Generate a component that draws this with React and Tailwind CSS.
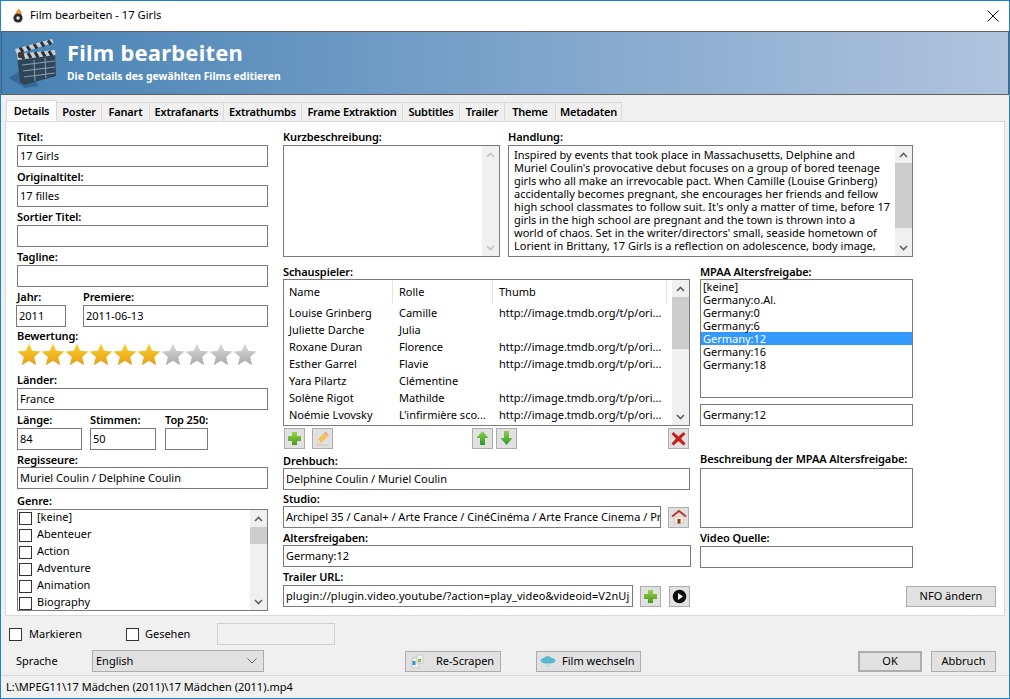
import React from "react";

const Label = ({ children, className = "h-[18px] pb-[1px]" }) => (
  <div className={`${className} flex items-end shrink-0 font-semibold leading-[14px] whitespace-nowrap text-[11px] tracking-[-0.1px]`}>{children}</div>
);

const Input = ({ value = "", className = "w-full", disabled = false }) => (
  <div className={`${className} h-[22px] shrink-0 border ${disabled ? "border-[#cfcfcf] bg-[#f0f0f0]" : "border-[#7a7a7a] bg-white"} pl-[2px] pr-[2px] leading-[20px] overflow-hidden whitespace-nowrap`}>{value}</div>
);

const Chevron = ({ up, light }) => (
  <svg width="9" height="6" viewBox="0 0 9 6" fill="none" stroke={light ? "#c4c4c4" : "#606060"} strokeWidth="1.6">
    <path d={up ? "M1 5 L4.5 1.5 L8 5" : "M1 1 L4.5 4.5 L8 1"} />
  </svg>
);

const Scrollbar = ({ thumbClass = "", light = false }) => (
  <div className="w-[17px] shrink-0 h-full bg-[#f0f0f0] flex flex-col">
    <div className="h-[17px] shrink-0 flex items-center justify-center"><Chevron up light={light} /></div>
    <div className="flex-1 min-h-0">{!light && <div className={`bg-[#cdcdcd] ${thumbClass}`} />}</div>
    <div className="h-[17px] shrink-0 flex items-center justify-center"><Chevron light={light} /></div>
  </div>
);

const Star = ({ gold, id }) => (
  <svg width="24" height="23" viewBox="0 0 24 23" className="shrink-0">
    <defs>
      <linearGradient id={id} x1="0" y1="0" x2="0" y2="1">
        <stop offset="0" stopColor={gold ? "#fdd22f" : "#dcdcdc"} />
        <stop offset="1" stopColor={gold ? "#e39c13" : "#a9a9a9"} />
      </linearGradient>
    </defs>
    <path d="M12 0.5 L15.2 7.8 L23.5 8.6 L17.2 14 L19.2 22.2 L12 17.8 L4.8 22.2 L6.8 14 L0.5 8.6 L8.8 7.8 Z" fill={`url(#${id})`} />
  </svg>
);

const IconBtn = ({ children, className = "" }) => (
  <div className={`w-[21px] h-[21px] shrink-0 border border-[#adadad] bg-[#e1e1e1] flex items-center justify-center ${className}`}>{children}</div>
);

const Plus = () => (
  <svg width="15" height="15" viewBox="0 0 15 15">
    <defs><linearGradient id="pg" x1="0" y1="0" x2="0" y2="1"><stop offset="0" stopColor="#9ad04a" /><stop offset="1" stopColor="#4a9a1e" /></linearGradient></defs>
    <path d="M5 1 H10 V5 H14 V10 H10 V14 H5 V10 H1 V5 H5 Z" fill="url(#pg)" />
  </svg>
);
const Pencil = () => (
  <svg width="16" height="16" viewBox="0 0 16 16">
    <path d="M10 2.5 L13 5.5 L6 12.5 L3 13 L3.5 9.5 Z" fill="#f6c55a" stroke="#e8a23c" strokeWidth="0.6" />
    <path d="M10.5 1.5 L14 5 L12.8 6.2 L9.3 2.7 Z" fill="#eba0a0" />
    <path d="M3.5 9.5 L6 12.5 L3 13 Z" fill="#f5ead0" />
    <path d="M1 15 H14" stroke="#d0c6b4" strokeWidth="1" />
  </svg>
);
const Arrow = ({ down }) => (
  <svg width="13" height="16" viewBox="0 0 13 16">
    <defs><linearGradient id={down ? "ad" : "au"} x1="0" y1="0" x2="0" y2="1"><stop offset="0" stopColor="#93cc4e" /><stop offset="1" stopColor="#2f9a2a" /></linearGradient></defs>
    <path d={down ? "M4 1 H9 V8 H12.5 L6.5 15 L0.5 8 H4 Z" : "M6.5 1 L12.5 8 H9 V15 H4 V8 H0.5 Z"} fill={`url(#${down ? "ad" : "au"})`} />
  </svg>
);
const Cross = () => (
  <svg width="15" height="15" viewBox="0 0 15 15">
    <path d="M2.5 1 L7.5 5.5 L12.5 1 L14.5 3 L10 7.5 L14.5 12.5 L12.5 14.5 L7.5 10 L2.5 14.5 L0.5 12.5 L5 7.5 L0.5 3 Z" fill="#c8211c" />
  </svg>
);
const House = () => (
  <svg width="16" height="16" viewBox="0 0 16 16">
    <path d="M3.5 7.5 H12.5 V14.5 H3.5 Z" fill="#f3ead8" stroke="#c9bda5" strokeWidth="0.5" />
    <path d="M6.5 10 H9.5 V14.5 H6.5 Z" fill="#8a3a20" />
    <path d="M1 7.5 L8 2 L15 7.5" fill="none" stroke="#c0302a" strokeWidth="1.8" />
  </svg>
);
const Play = () => (
  <svg width="15" height="15" viewBox="0 0 15 15">
    <circle cx="7.5" cy="7.5" r="6.8" fill="#0a0a0a" />
    <path d="M6 4 L11 7.5 L6 11 Z" fill="#ffffff" />
  </svg>
);
const Rescrape = () => (
  <svg width="14" height="15" viewBox="0 0 14 15" className="shrink-0">
    <path d="M2 4 H9 V14 H2 Z" fill="#eeeee8" stroke="#b5b5aa" strokeWidth="0.6" />
    <path d="M7 1 H13 V9 H7 Z" fill="#f5f5ef" stroke="#b5b5aa" strokeWidth="0.6" />
    <rect x="2.5" y="7" width="3" height="4" fill="#3a8fd0" />
    <rect x="8" y="5" width="3" height="3" fill="#7fbf4a" />
  </svg>
);
const Cloud = () => (
  <svg width="16" height="14" viewBox="0 0 16 14" className="shrink-0">
    <path d="M0.5 6.5 C1 4.5 3 4 4 4 C5 1.5 10.5 1.5 11.5 4 C13 4 15 4.8 15.5 6.5 C15 9 11 9.5 8 9.5 C5 9.5 1 9 0.5 6.5 Z" fill="#5ab9cf" />
    <path d="M6.5 10.5 H9.5 L10.5 12.5 H5.5 Z" fill="#bcd6dc" />
  </svg>
);

const Clapper = () => (
  <svg width="48" height="50" viewBox="0 0 48 50" className="shrink-0">
    <path d="M0 40 L14 31 L30 48 L16 50 Z" fill="#2f5f8c" opacity="0.75" />
    <path d="M8 17 L46 13 L47 38 L15 47 L11 44 Z" fill="#2f4659" />
    <path d="M8 16 L46 12 L46.5 17 L8.5 22 Z" fill="#c7d0d6" />
    <path d="M12 15.5 L15 21 M19 15 L22 20 M26 14 L29 19.5 M33 13.5 L36 18.5 M40 13 L43 18" stroke="#2a3036" strokeWidth="3" />
    <path d="M6 11 L43 1 L44.5 5 L7.5 16 Z" fill="#c7d0d6" />
    <path d="M11 9.5 L14 14 M18 8 L21 12.5 M25 6 L28 10.5 M32 4 L35 8.5 M39 2.5 L42 6.5" stroke="#2a3036" strokeWidth="3" />
    <circle cx="12" cy="17" r="3.2" fill="#3a3a3a" />
    <path d="M13 27 L46 23 M14 33 L46 29 M15 39 L46 35" stroke="#88a2b5" strokeWidth="1" />
    <path d="M25 22 L26 43 M36 20 L37 40" stroke="#88a2b5" strokeWidth="1" />
  </svg>
);

const Hearth = () => (
  <svg width="12" height="15" viewBox="0 0 12 15" className="shrink-0">
    <path d="M6 0.5 C8.5 2.5 10 4.5 9.5 7 L3 6.5 C3 4.5 5.5 3.5 6 0.5 Z" fill="#f08a1d" />
    <path d="M6 3.5 C7 4.5 7.8 5.5 7.5 6.5 L4.8 6.5 C4.8 5.5 5.8 5 6 3.5 Z" fill="#ffd24a" />
    <circle cx="6" cy="10" r="4.6" fill="#2b2b2b" />
    <circle cx="6" cy="10" r="1.7" fill="#e8e8e8" />
  </svg>
);

const Check = ({ className = "" }) => <div className={`w-[13px] h-[13px] shrink-0 border border-[#333333] bg-white ${className}`} />;

const Tab = ({ children, className }) => (
  <div className={`h-[19px] mt-[2px] pt-[1px] shrink-0 border border-l-0 border-b-0 border-[#d9d9d9] bg-[#f0f0f0] flex items-center justify-center font-semibold text-[11px] tracking-[-0.2px] whitespace-nowrap ${className}`}>{children}</div>
);

const Btn = ({ children, className = "" }) => (
  <div className={`h-[21px] shrink-0 border border-[#adadad] bg-[#e1e1e1] flex items-center whitespace-nowrap ${className}`}>{children}</div>
);

const actors = [
  ["Louise Grinberg", "Camille", true],
  ["Juliette Darche", "Julia", false],
  ["Roxane Duran", "Florence", true],
  ["Esther Garrel", "Flavie", true],
  ["Yara Pilartz", "Clémentine", false],
  ["Solène Rigot", "Mathilde", true],
  ["Noémie Lvovsky", "L'infirmière sco...", true],
];
const genres = ["[keine]", "Abenteuer", "Action", "Adventure", "Animation", "Biography"];
const mpaa = ["[keine]", "Germany:o.Al.", "Germany:0", "Germany:6", "Germany:12", "Germany:16", "Germany:18"];
const plot = [
  "Inspired by events that took place in Massachusetts, Delphine and",
  "Muriel Coulin's provocative debut focuses on a group of bored teenage",
  "girls who all make an irrevocable pact. When Camille (Louise Grinberg)",
  "accidentally becomes pregnant, she encourages her friends and fellow",
  "high school classmates to follow suit. It's only a matter of time, before 17",
  "girls in the high school are pregnant and the town is thrown into a",
  "world of chaos. Set in the writer/directors' small, seaside hometown of",
  "Lorient in Brittany, 17 Girls is a reflection on adolescence, body image,",
];

export default function App() {
  return (
    <div className="w-[1010px] h-[699px] border border-[#1883d7] bg-[#f0f0f0] flex flex-col overflow-hidden text-[11px] text-black font-['Noto_Sans','Open_Sans',sans-serif]">
      <div className="h-[30px] shrink-0 bg-white flex items-center pl-[11px] pb-[1px]">
        <Hearth />
        <span className="ml-[6px] text-[11.2px]">Film bearbeiten - 17 Girls</span>
        <svg width="12" height="12" viewBox="0 0 12 12" className="ml-auto mr-[10px]" stroke="#111111" strokeWidth="1"><path d="M0.5 0.5 L11.5 11.5 M11.5 0.5 L0.5 11.5" /></svg>
      </div>

      <div className="h-[64px] shrink-0 border border-[#5f5f5f] bg-gradient-to-r from-[#4682b4] to-[#b0c4de] flex items-center pl-[7px]">
        <Clapper />
        <div className="ml-[10px] pb-[5px] text-white font-bold">
          <div className="text-[22px] leading-[28px] tracking-[0.2px]">Film bearbeiten</div>
          <div className="text-[10.4px] leading-[15px] mt-[3px]">Die Details des gewählten Films editieren</div>
        </div>
      </div>

      <div className="flex pl-[5px] h-[22px] mt-[5px] shrink-0 relative z-10">
        <div className="h-[21px] pt-[1px] w-[51px] shrink-0 border border-b-0 border-[#d9d9d9] bg-white flex items-center justify-center font-semibold tracking-[-0.2px]">Details</div>
        <Tab className="w-[45px]">Poster</Tab>
        <Tab className="w-[48px]">Fanart</Tab>
        <Tab className="w-[74px]">Extrafanarts</Tab>
        <Tab className="w-[78px]">Extrathumbs</Tab>
        <Tab className="w-[101px]">Frame Extraktion</Tab>
        <Tab className="w-[57px]">Subtitles</Tab>
        <Tab className="w-[45px]">Trailer</Tab>
        <Tab className="w-[51px]">Theme</Tab>
        <Tab className="w-[66px]">Metadaten</Tab>
      </div>

      <div className="h-[495px] -mt-[1px] mx-[4px] shrink-0 border border-[#d9d9d9] bg-white flex pl-[11px] pt-[5px] gap-[15px]">
        <div className="w-[251px] shrink-0 flex flex-col">
          <Label>Titel:</Label>
          <Input value="17 Girls" />
          <Label>Originaltitel:</Label>
          <Input value="17 filles" />
          <Label>Sortier Titel:</Label>
          <Input />
          <Label>Tagline:</Label>
          <Input />
          <div className="flex">
            <div className="w-[50px] shrink-0 -ml-[1px]">
              <Label className="h-[18px] pb-[1px] pl-[1px]">Jahr:</Label>
              <Input value="2011" />
            </div>
            <div className="ml-[17px] flex-1">
              <Label>Premiere:</Label>
              <Input value="2011-06-13" />
            </div>
          </div>
          <Label className="h-[16px]">Bewertung:</Label>
          <div className="flex h-[23px]">
            {[0, 1, 2, 3, 4, 5, 6, 7, 8, 9].map((i) => <Star key={i} gold={i < 6} id={`star${i}`} />)}
          </div>
          <Label className="h-[22px] pb-[1px]">Länder:</Label>
          <Input value="France" />
          <div className="flex">
            <div className="w-[65px] shrink-0">
              <Label>Länge:</Label>
              <Input value="84" />
            </div>
            <div className="w-[66px] shrink-0 ml-[8px]">
              <Label>Stimmen:</Label>
              <Input value="50" />
            </div>
            <div className="w-[43px] shrink-0 ml-[9px]">
              <Label>Top 250:</Label>
              <Input />
            </div>
          </div>
          <Label className="h-[17px]">Regisseure:</Label>
          <Input value="Muriel Coulin / Delphine Coulin" />
          <Label className="h-[20px] pb-[1px]">Genre:</Label>
          <div className="h-[102px] shrink-0 border border-[#7a7a7a] flex overflow-hidden">
            <div className="flex-1">
              {genres.map((g) => (
                <div key={g} className="h-[17px] flex items-center pl-[1px]">
                  <Check />
                  <span className="ml-[5px] mb-[4px] leading-[13px]">{g}</span>
                </div>
              ))}
            </div>
            <Scrollbar thumbClass="h-[17px]" />
          </div>
        </div>

        <div className="flex flex-col w-[713px]">
          <div className="flex gap-[8px] w-[630px]">
            <div className="w-[217px]">
              <Label>Kurzbeschreibung:</Label>
              <div className="h-[112px] border border-[#7a7a7a] flex justify-end"><Scrollbar light /></div>
            </div>
            <div className="w-[405px]">
              <Label>Handlung:</Label>
              <div className="h-[112px] border border-[#7a7a7a] flex overflow-hidden">
                <div className="flex-1 pl-[5px] pt-[2px] leading-[13px] text-[11px] whitespace-nowrap overflow-hidden">
                  {plot.map((l) => <div key={l}>{l}</div>)}
                </div>
                <Scrollbar thumbClass="h-[65px]" />
              </div>
            </div>
          </div>

          <div className="flex gap-[10px]">
            <div className="w-[407px] shrink-0 flex flex-col">
              <Label className="h-[22px]">Schauspieler:</Label>
              <div className="h-[147px] shrink-0 border border-[#7a7a7a] flex overflow-hidden">
                <div className="flex-1 min-w-0">
                  <div className="h-[24px] flex items-center bg-white">
                    <div className="w-[109px] h-full pl-[5px] border-r border-[#e5e5e5] flex items-center">Name</div>
                    <div className="w-[100px] h-full pl-[6px] border-r border-[#e5e5e5] flex items-center">Rolle</div>
                    <div className="w-[174px] h-full pl-[6px] border-r border-[#e5e5e5] flex items-center">Thumb</div>
                  </div>
                  <div className="pt-[1px]">
                    {actors.map(([n, r, t]) => (
                      <div key={n} className="h-[17px] flex items-center">
                        <div className="w-[109px] pl-[5px] whitespace-nowrap">{n}</div>
                        <div className="w-[100px] pl-[6px] whitespace-nowrap">{r}</div>
                        <div className="pl-[6px] whitespace-nowrap">{t ? "http://image.tmdb.org/t/p/ori..." : ""}</div>
                      </div>
                    ))}
                  </div>
                </div>
                <Scrollbar thumbClass="h-[52px]" />
              </div>
              <div className="flex mt-[1px] h-[22px] items-center pl-[1px]">
                <IconBtn><Plus /></IconBtn>
                <IconBtn className="ml-[7px]"><Pencil /></IconBtn>
                <IconBtn className="ml-[139px]"><Arrow /></IconBtn>
                <IconBtn className="ml-[3px]"><Arrow down /></IconBtn>
                <IconBtn className="ml-auto mr-[1px]"><Cross /></IconBtn>
              </div>
              <Label className="h-[19px]">Drehbuch:</Label>
              <Input value="Delphine Coulin / Muriel Coulin" />
              <Label className="h-[16px]">Studio:</Label>
              <div className="flex items-center">
                <Input className="w-[378px]" value="Archipel 35 / Canal+ / Arte France / CinéCinéma / Arte France Cinema / Pr" />
                <IconBtn className="ml-[7px]"><House /></IconBtn>
              </div>
              <Label className="h-[17px]">Altersfreigaben:</Label>
              <Input className="w-[408px]" value="Germany:12" />
              <Label>Trailer URL:</Label>
              <div className="flex items-center">
                <Input className="w-[350px] tracking-[0.1px]" value="plugin://plugin.video.youtube/?action=play_video&videoid=V2nUj" />
                <IconBtn className="ml-[7px]"><Plus /></IconBtn>
                <IconBtn className="ml-[8px]"><Play /></IconBtn>
              </div>
            </div>

            <div className="w-[296px] shrink-0 flex flex-col">
              <Label className="h-[22px] w-[213px]">MPAA Altersfreigabe:</Label>
              <div className="h-[119px] w-[213px] border border-[#7a7a7a] shrink-0">
                {mpaa.map((m) => (
                  <div key={m} className={`h-[13px] leading-[13px] pl-[2px] ${m === "Germany:12" ? "bg-[#3399ff] text-white" : ""}`}>{m}</div>
                ))}
              </div>
              <Input className="w-[213px] mt-[6px]" value="Germany:12" />
              <Label className="h-[42px] w-[213px] pb-[2px]">Beschreibung der MPAA Altersfreigabe:</Label>
              <div className="h-[60px] w-[213px] border border-[#7a7a7a] shrink-0" />
              <Label className="h-[18px] pb-[1px] w-[213px]">Video Quelle:</Label>
              <Input className="w-[213px]" />
              <Btn className="w-[90px] self-end mt-[18px] justify-center">NFO ändern</Btn>
            </div>
          </div>
        </div>
      </div>

      <div className="flex items-center h-[22px] mt-[7px] pl-[8px] shrink-0">
        <Check />
        <span className="ml-[7px]">Markieren</span>
        <Check className="ml-[44px]" />
        <span className="ml-[6px]">Gesehen</span>
        <Input className="w-[118px] ml-[27px]" disabled />
      </div>
      <div className="flex items-center h-[22px] mt-[5px] shrink-0">
        <span className="ml-[15px] w-[76px]">Sprache</span>
        <div className="w-[172px] h-[22px] border border-[#adadad] bg-[#e1e1e1] flex items-center pl-[3px] pr-[6px] justify-between shrink-0">
          English
          <svg width="10" height="6" viewBox="0 0 10 6" fill="none" stroke="#606060"><path d="M0.5 0.5 L5 5 L9.5 0.5" /></svg>
        </div>
        <Btn className="w-[96px] ml-[141px] pl-[4px] gap-[12px]"><Rescrape /><span>Re-Scrapen</span></Btn>
        <Btn className="w-[105px] ml-[35px] pl-[3px] gap-[6px]"><Cloud /><span>Film wechseln</span></Btn>
        <Btn className="w-[64px] ml-[217px] border-[2px] border-[#0078d7] justify-center">OK</Btn>
        <Btn className="w-[65px] ml-[9px] justify-center">Abbruch</Btn>
      </div>
      <div className="mt-[3px] flex-1 border-t border-[#d9d9d9] flex items-center pl-[5px] text-[11px]">L:\MPEG11\17 Mädchen (2011)\17 Mädchen (2011).mp4</div>
    </div>
  );
}
